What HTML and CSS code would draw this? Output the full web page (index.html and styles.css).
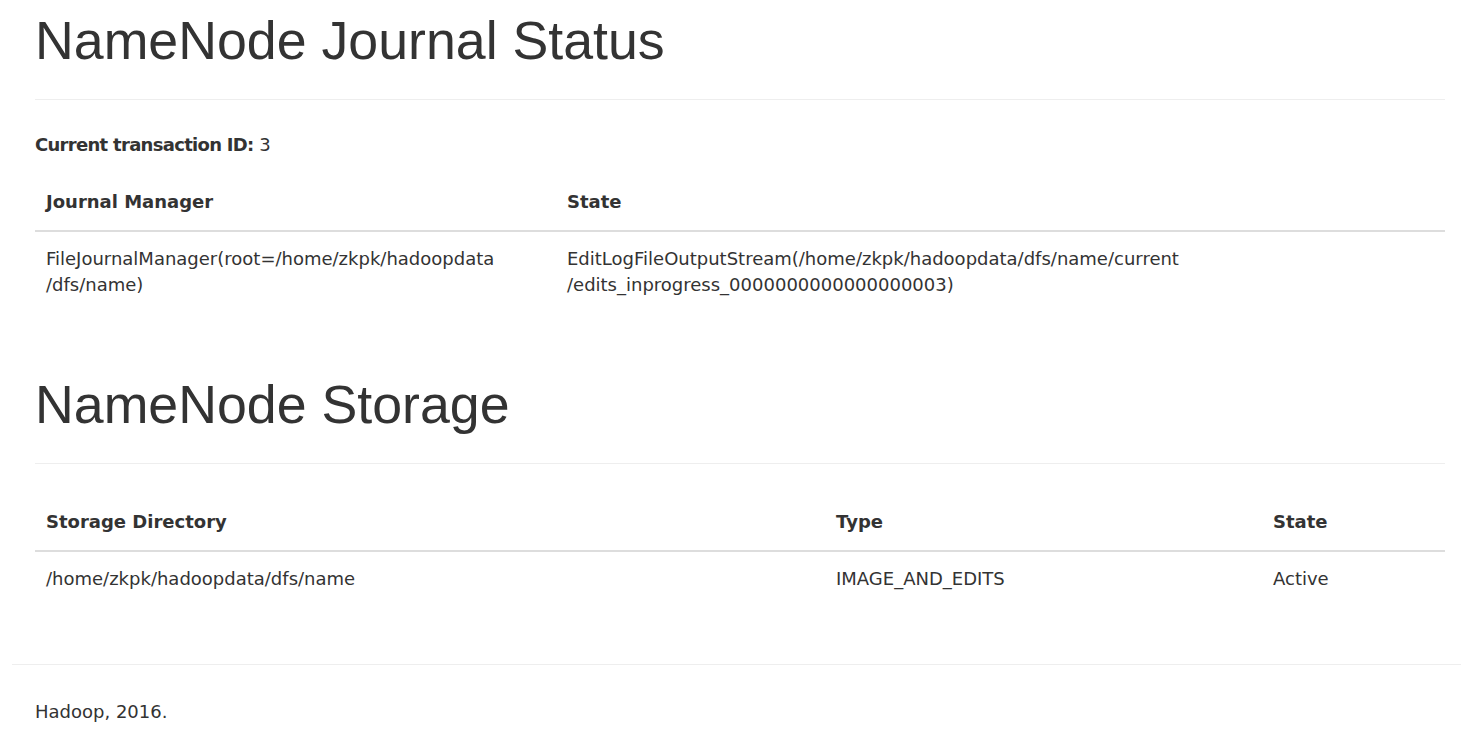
FILE: index.html
```html
<!DOCTYPE html>
<html>
<head>
<meta charset="utf-8">
<title>NameNode Journal Status</title>
<link rel="stylesheet" href="styles.css">
</head>
<body>
<main class="container">
  <section class="section">
    <div class="page-header"><h1>NameNode Journal Status</h1></div>
    <p class="txid"><b>Current transaction ID:</b> 3</p>
    <table class="table journal">
      <colgroup><col class="c-jm"><col></colgroup>
      <thead>
        <tr><th>Journal Manager</th><th>State</th></tr>
      </thead>
      <tbody>
        <tr>
          <td>FileJournalManager(root=/home/zkpk/hadoopdata<br>/dfs/name)</td>
          <td>EditLogFileOutputStream(/home/zkpk/hadoopdata/dfs/name/current<br>/edits_inprogress_0000000000000000003)</td>
        </tr>
      </tbody>
    </table>
  </section>
  <section class="section second">
    <div class="page-header"><h1>NameNode Storage</h1></div>
    <table class="table storage">
      <colgroup><col class="c-dir"><col class="c-type"><col></colgroup>
      <thead>
        <tr><th>Storage Directory</th><th>Type</th><th>State</th></tr>
      </thead>
      <tbody>
        <tr><td>/home/zkpk/hadoopdata/dfs/name</td><td>IMAGE_AND_EDITS</td><td>Active</td></tr>
      </tbody>
    </table>
  </section>
</main>
<footer class="footer">
  <hr class="footer-rule">
  <p class="footer-text">Hadoop, 2016.</p>
</footer>
</body>
</html>
```

FILE: styles.css
```css
html, body {
  margin: 0;
  padding: 0;
  background: #fff;
}
body {
  font-family: "DejaVu Sans", sans-serif;
  font-size: 18px;
  line-height: 26px;
  color: #333;
}
.container {
  padding: 0 16px 0 35px;
}
.page-header {
  padding-top: 10px;
  padding-bottom: 29px;
  border-bottom: 1px solid #eee;
}
.page-header h1 {
  margin: 0;
  font-family: "Liberation Sans", Arial, sans-serif;
  font-weight: normal;
  font-size: 53.7px;
  line-height: 60px;
  color: #333;
}
.second {
  margin-top: 52px;
}
.txid {
  margin: 32px 0 20px;
}
.txid b {
  font-weight: bold;
  letter-spacing: -0.7px;
}
.table {
  width: 100%;
  border-collapse: collapse;
  border-spacing: 0;
  table-layout: fixed;
}
.storage {
  margin-top: 34px;
}
.table th {
  text-align: left;
  font-weight: bold;
  padding: 11px 11px 15px;
  border-bottom: 2px solid #ddd;
  vertical-align: bottom;
}
.table td {
  padding: 14px 11px;
  vertical-align: top;
}
.c-jm { width: 521px; }
.c-dir { width: 790px; }
.c-type { width: 437px; }
.footer {
  margin-top: 58px;
}
.footer-rule {
  margin: 0 0 0 12px;
  border: 0;
  border-top: 1px solid #eee;
  height: 0;
}
.footer-text {
  margin: 34px 0 0 35px;
}
```
